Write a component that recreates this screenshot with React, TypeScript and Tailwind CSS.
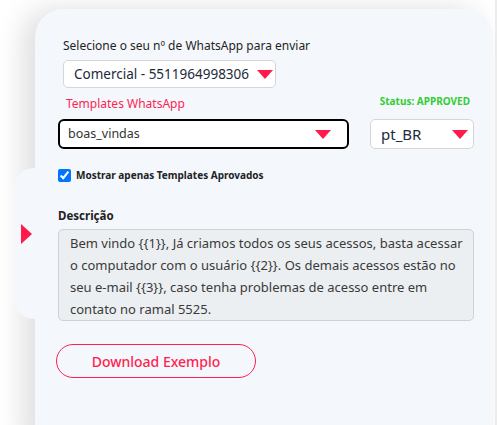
import React from "react";

const Caret = ({ className = "" }: { className?: string }) => (
  <svg width="16" height="9" viewBox="0 0 16 9" className={className}>
    <polygon points="0,0 16,0 8,9" fill="#ff1a4b" />
  </svg>
);

const App = () => {
  return (
    <div
      className="relative w-full h-[425px] bg-white overflow-hidden border-r-2 border-[#ececec]"
      style={{ fontFamily: '"Noto Sans", "Open Sans", sans-serif' }}
    >
      <div className="ml-[35px] mt-[9px] mr-[2px] h-[440px] bg-[#f4f7fb] rounded-t-[28px] shadow-[-12px_0_28px_rgba(0,0,0,0.13)] pl-[23px] pt-[29px]">
        <p className="ml-[5px] text-[12px] leading-[16px] text-[#1f1f1f]">
          Selecione o seu nº de WhatsApp para enviar
        </p>
        <div className="ml-[5px] mt-[6px] w-[213px] h-[28px] bg-white border border-[#d6d6d6] rounded-[5px] flex items-center justify-between pl-[10px] pr-[2px]">
          <span className="text-[13.5px] whitespace-nowrap text-[#1c2b3c]">
            Comercial - 5511964998306
          </span>
          <Caret />
        </div>

        <div className="mt-[6px] flex items-end justify-between w-[416px]">
          <span className="ml-[8px] text-[12px] leading-[20px] text-[#ff2453]">
            Templates WhatsApp
          </span>
          <span className="mr-[4px] mb-[5px] text-[10px] font-bold text-[#33cc33]">
            Status: APPROVED
          </span>
        </div>

        <div className="mt-[5px] flex gap-[21px]">
          <div className="w-[291px] h-[30px] bg-white border-2 border-black rounded-[6px] flex items-center justify-between pl-[8px] pr-[16px]">
            <span className="text-[12.5px] text-[#333]">boas_vindas</span>
            <Caret />
          </div>
          <div className="w-[104px] h-[30px] bg-white border border-[#d6d6d6] rounded-[5px] flex items-center justify-between pl-[10px] pr-[5px]">
            <span className="text-[15px] text-[#1c2b3c]">pt_BR</span>
            <Caret />
          </div>
        </div>

        <label className="mt-[19px] flex items-center gap-[5px]">
          <input
            type="checkbox"
            defaultChecked
            className="w-[13px] h-[13px] accent-[#0075ff] m-0"
          />
          <span className="text-[10px] font-bold text-[#222]">
            Mostrar apenas Templates Aprovados
          </span>
        </label>

        <p className="mt-[24px] text-[11.5px] font-bold text-[#222]">Descrição</p>
        <div className="mt-[5px] w-[416px] h-[92px] bg-[#eceff1] border border-[#cfd2d4] rounded-[5px] pl-[11px] pr-[2px] pt-[2px] text-[13px] leading-[22px] text-[#3a3a3a] whitespace-nowrap overflow-hidden">
          Bem vindo {"{{1}}"}, Já criamos todos os seus acessos, basta acessar
          <br />
          o computador com o usuário {"{{2}}"}. Os demais acessos estão no
          <br />
          seu e-mail {"{{3}}"}, caso tenha problemas de acesso entre em
          <br />
          contato no ramal 5525.
        </div>

        <button className="mt-[23px] -ml-[2px] w-[200px] h-[34px] rounded-full border border-[#ff1f4f] text-[14px] font-medium text-[#ff1f4f] bg-transparent">
          Download Exemplo
        </button>
      </div>

      <div className="absolute left-[14px] top-[168px] w-[30px] h-[151px] bg-[#f4f7fb] rounded-l-[20px] flex items-center pl-[7px]">
        <svg width="11" height="20" viewBox="0 0 11 20" className="-mt-[20px]">
          <polygon points="0,0 11,10 0,20" fill="#ff1a4b" />
        </svg>
      </div>
    </div>
  );
};

export default App;
